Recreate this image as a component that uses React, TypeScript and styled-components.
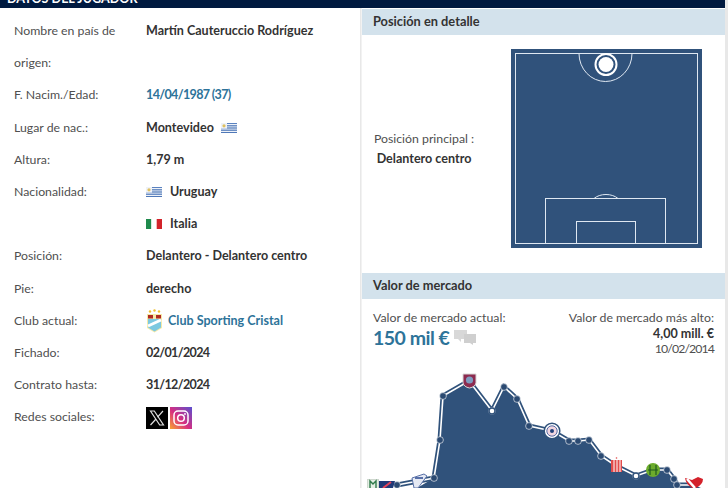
import { createGlobalStyle, styled } from "styled-components";

const GlobalStyle = createGlobalStyle`
  html, body {
    margin: 0;
    padding: 0;
    background: #fff;
  }
  body {
    font-family: Lato, "Noto Sans", "Liberation Sans", sans-serif;
    font-size: 12.3px;
    color: #333;
  }
`;

const Page = styled.div`
  width: 728px;
  height: 488px;
  overflow: hidden;
  display: grid;
  grid-template-columns: 360px 365px;
  grid-template-rows: 8px 1fr;
  background: #e8e8e8;
  padding-right: 3px;
  box-sizing: border-box;
`;

const TopBar = styled.div`
  grid-column: 1 / 3;
  background: #001a40;
  color: #fff;
  overflow: hidden;
  display: flex;
  align-items: flex-end;
  padding-left: 7px;
`;

const TopTitle = styled.h2`
  margin: 0 0 1px;
  font-size: 12.6px;
  line-height: 16px;
  font-weight: 700;
  flex-shrink: 0;
`;

const LeftPanel = styled.section`
  background: #fff;
  padding: 7px 14px 0;
`;

const InfoGrid = styled.dl`
  margin: 0;
  display: grid;
  grid-template-columns: 132px 1fr;
  grid-auto-rows: minmax(32.2px, auto);
  line-height: 32.2px;
`;

const Label = styled.dt`
  color: #4f4f4f;
`;

const Value = styled.dd<{ $link?: boolean; $date?: boolean }>`
  margin: 0;
  align-self: start;
  font-size: 12.55px;
  font-weight: 700;
  letter-spacing: ${(p) => (p.$date ? "-0.65px" : "0")};
  color: ${(p) => (p.$link ? "#2d7399" : "#333")};
  display: flex;
  align-items: center;
  height: 32.2px;
`;

const Right = styled.div`
  display: flex;
  flex-direction: column;
  margin-left: 1px;
  gap: 13px;
  padding-top: 1px;
  background: #fff;
  border-left: 1px solid #f2f2f2;
`;

const Card = styled.section`
  display: flex;
  flex-direction: column;
`;

const CardHead = styled.h3`
  margin: 0;
  height: 26px;
  line-height: 25px;
  padding-left: 11px;
  background: #d3e2ec;
  font-size: 12.8px;
  font-weight: 700;
  color: #333;
`;

const PositionBody = styled.div`
  display: grid;
  grid-template-columns: 149px 191px;
  align-items: center;
  padding: 14px 0 12px;
`;

const PositionText = styled.div`
  justify-self: start;
  margin-left: 11px;
  width: 102px;
  white-space: nowrap;
  text-align: center;
  line-height: 19.5px;
  color: #4f4f4f;
`;

const PositionName = styled.div`
  color: #333;
  font-size: 12.55px;
  font-weight: 700;
`;

const Pitch = styled.svg`
  display: block;
  width: 191px;
  height: 199px;
`;

const MarketBody = styled.div`
  height: 56px;
  box-sizing: border-box;
  padding: 11px 11px 0;
  display: flex;
  justify-content: space-between;
  line-height: 15.5px;
  color: #4f4f4f;
`;

const MarketBlock = styled.div<{ $right?: boolean }>`
  text-align: ${(p) => (p.$right ? "right" : "left")};
`;

const MarketValue = styled.div`
  display: flex;
  align-items: center;
  gap: 5px;
  font-size: 19.5px;
  letter-spacing: -0.5px;
  line-height: 24px;
  font-weight: 700;
  color: #2d7399;
`;

const HighValue = styled.div`
  font-size: 12.55px;
  font-weight: 700;
  color: #333;
`;

const HighDate = styled.div`
  letter-spacing: -0.9px;
`;

const Chart = styled.svg`
  display: block;
  width: 364px;
  height: 133px;
  flex-shrink: 0;
`;

const FlagSvg = styled.svg`
  width: 16px;
  height: 10px;
  flex-shrink: 0;
`;

const FlagAfter = styled(FlagSvg)`
  margin-left: 7px;
`;

const FlagBefore = styled(FlagSvg)`
  margin-right: 8px;
`;

const Crest = styled.svg`
  width: 17px;
  height: 24px;
  margin-right: 5px;
  flex-shrink: 0;
`;

const SocialRow = styled.div`
  display: flex;
  gap: 2px;
`;

const SocialIcon = styled.svg`
  display: block;
  width: 22px;
  height: 22px;
`;

const UruguayArt = () => (
  <>
    <rect width="16" height="10" fill="#eef2f8" />
    <rect y="0" width="16" height="1" fill="#5a82c0" />
    <rect y="2.2" width="16" height="1.2" fill="#4f78b8" />
    <rect y="4.4" width="16" height="1.2" fill="#4f78b8" />
    <rect y="6.6" width="16" height="1.2" fill="#4f78b8" />
    <rect y="9" width="16" height="1" fill="#4f78b8" />
    <rect width="6" height="5.600" fill="#eef2f8" />
    <circle cx="3" cy="2.800" r="1.600" fill="#dfc060" />
  </>
);

const points: [number, number][] = [
  [36, 215], [73, 208], [79, 170], [82, 126], [108, 111], [131, 141], [143, 117],
  [156, 129], [168, 156], [191, 161], [208, 171], [217, 171], [228, 170], [240, 186],
  [255, 196], [275, 206], [292, 200], [306, 200], [313, 209], [316, 215], [333, 215],
];

const linePath = points.map(([x, y]) => `${x},${y}`).join(" ");
const dots = points.filter((_, i) => ![4, 9, 14, 16, 20].includes(i));

const PlayerChart = () => (
  <Chart viewBox="1 85 364 133">
    <polygon points={`56,218 ${points.slice(1).map(([x, y]) => `${x},${y}`).join(" ")} 340,218`} fill="#30527b" />
    <polyline points={linePath} fill="none" stroke="#30527b" strokeWidth="5" />
    <polyline points={linePath} fill="none" stroke="#fff" strokeWidth="1.600" />
    {dots.map(([x, y]) => (
      <circle key={x} cx={x} cy={y} r="3.400" fill="#2b4a72" stroke="#fff" strokeWidth="0.600" />
    ))}
    <circle cx="131" cy="141" r="3" fill="#fff" stroke="#30527b" strokeWidth="1.400" />
    <circle cx="275" cy="206" r="3" fill="#fff" stroke="#30527b" strokeWidth="1.400" />

    {/* club crests along the line */}
    <path d="M102 104h13v9q-1 4-6.500 5q-5.500-1-6.500-5z" fill="#8d2b4f" stroke="#d8d8d8" />
    <circle cx="108.500" cy="110" r="3.600" fill="#7f9cc0" />

    <circle cx="191" cy="161" r="7.800" fill="#fff" stroke="#30527b" strokeWidth="1.500" />
    <circle cx="191" cy="161" r="5.200" fill="#f0d6e0" stroke="#2c4a90" strokeWidth="0.800" />
    <circle cx="191" cy="161" r="2" fill="#20407a" />

    <rect x="250" y="190" width="11" height="12" fill="#e24b4b" />
    <path d="M253 190v12M256 190v12M259 190v12" stroke="#fff" strokeWidth="1" />
    <circle cx="255.500" cy="188" r="0.800" fill="#e24b4b" />

    <ellipse cx="292" cy="200" rx="7" ry="7" fill="#6cac2c" />
    <path d="M287 200h10M289 195v10M295 195v10" stroke="#1f5a20" strokeWidth="1.200" />

    <path d="M324 208l7 2l6-3l5 2q0 6-9 10q-8-4-9-11z" fill="#d4212a" />
    <path d="M326 209l8 9" stroke="#fff" strokeWidth="2.500" />

    <rect x="6.500" y="209.500" width="11" height="9" fill="#e4efe4" stroke="#cfd8cf" />
    <path d="M9 218v-7l3 3l3-3v7" fill="none" stroke="#2f7a4a" strokeWidth="1.400" />
    <path d="M18 211h16l-2 7h-14z" fill="#203a78" />
    <path d="M22 218l8-6" stroke="#e4435a" strokeWidth="2" />

    <path d="M51 208l12-4l3 2l-9 12h-4z" fill="#e5e9f3" stroke="#5870a8" />
    <path d="M54 208h8" stroke="#5870a8" strokeWidth="2" />
  </Chart>
);

export default function App() {
  return (
    <>
      <GlobalStyle />
      <Page>
        <TopBar>
          <TopTitle>DATOS DEL JUGADOR</TopTitle>
        </TopBar>
        <LeftPanel>
          <InfoGrid>
            <Label>Nombre en país de origen:</Label>
            <Value>Martín Cauteruccio Rodríguez</Value>
            <Label>F. Nacim./Edad:</Label>
            <Value $link $date>14/04/1987 (37)</Value>
            <Label>Lugar de nac.:</Label>
            <Value>
              Montevideo
              <FlagAfter viewBox="0 0 16 10"><UruguayArt /></FlagAfter>
            </Value>
            <Label>Altura:</Label>
            <Value>1,79 m</Value>
            <Label>Nacionalidad:</Label>
            <Value>
              <FlagBefore viewBox="0 0 16 10"><UruguayArt /></FlagBefore>
              Uruguay
            </Value>
            <Label />
            <Value>
              <FlagBefore viewBox="0 0 16 10">
                <rect width="5.400" height="10" fill="#1f8a4c" />
                <rect x="5.400" width="5.300" height="10" fill="#fff" />
                <rect x="10.700" width="5.300" height="10" fill="#d2232a" />
              </FlagBefore>
              Italia
            </Value>
            <Label>Posición:</Label>
            <Value>Delantero - Delantero centro</Value>
            <Label>Pie:</Label>
            <Value>derecho</Value>
            <Label>Club actual:</Label>
            <Value $link>
              <Crest viewBox="0 0 17 24">
                <circle cx="4" cy="2.500" r="1.200" fill="#f0c030" />
                <circle cx="8.500" cy="1.500" r="1.200" fill="#f0c030" />
                <circle cx="13" cy="2.500" r="1.200" fill="#f0c030" />
                <path d="M1 5h15v14l-7.500 4.500L1 19z" fill="#f5e9a8" />
                <rect x="2" y="6" width="5" height="3.500" fill="#b02a20" />
                <rect x="10" y="6" width="5" height="3.500" fill="#b02a20" />
                <path d="M2 10h13v8.500l-6.500 4l-6.500-4z" fill="#7cc8e0" />
                <path d="M2 17l13-6" stroke="#fff" strokeWidth="3" />
              </Crest>
              Club Sporting Cristal
            </Value>
            <Label>Fichado:</Label>
            <Value $date>02/01/2024</Value>
            <Label>Contrato hasta:</Label>
            <Value $date>31/12/2024</Value>
            <Label>Redes sociales:</Label>
            <Value>
              <SocialRow>
                <SocialIcon viewBox="0 0 22 22">
                  <rect width="22" height="22" fill="#000" />
                  <path d="M4.500 4h3.800l9.200 14h-3.800z" fill="none" stroke="#ddd" strokeWidth="1.200" />
                  <path d="M17 4l-5.500 6.200M10 12l-5.500 6" stroke="#ddd" strokeWidth="1.200" />
                </SocialIcon>
                <SocialIcon viewBox="0 0 22 22">
                  <defs>
                    <linearGradient id="ig" x1="0" y1="1" x2="1" y2="0">
                      <stop offset="0" stopColor="#f9a530" />
                      <stop offset="0.450" stopColor="#d72e80" />
                      <stop offset="1" stopColor="#5a4fcf" />
                    </linearGradient>
                  </defs>
                  <rect width="22" height="22" fill="url(#ig)" />
                  <rect x="4" y="4" width="14" height="14" rx="4" fill="none" stroke="#fff" strokeWidth="1.500" />
                  <circle cx="11" cy="11" r="3.300" fill="none" stroke="#fff" strokeWidth="1.500" />
                  <circle cx="15" cy="7" r="0.900" fill="#fff" />
                </SocialIcon>
              </SocialRow>
            </Value>
          </InfoGrid>
        </LeftPanel>
        <Right>
          <Card>
            <CardHead>Posición en detalle</CardHead>
            <PositionBody>
              <PositionText>
                Posición principal :
                <PositionName>Delantero centro</PositionName>
              </PositionText>
              <Pitch viewBox="0 0 191 199">
                <rect width="191" height="199" fill="#30527b" />
                <g fill="none" stroke="#dfe8f2" strokeWidth="1">
                  <rect x="4.500" y="4.500" width="182" height="190" />
                  <rect x="34.500" y="149.500" width="120" height="45" />
                  <rect x="65.500" y="172.500" width="59" height="22" />
                  <path d="M68 4.500a26.500 28 0 0 0 53 0" />
                  <path d="M83 149.500a15 10 0 0 1 24 0" />
                </g>
                <circle cx="95" cy="15.500" r="10.500" fill="#30527b" stroke="#fff" strokeWidth="2" />
                <circle cx="95" cy="15.500" r="7.500" fill="#fff" />
              </Pitch>
            </PositionBody>
          </Card>
          <Card>
            <CardHead>Valor de mercado</CardHead>
            <MarketBody>
              <MarketBlock>
                Valor de mercado actual:
                <MarketValue>
                  150 mil €
                  <svg width="22" height="15" viewBox="0 0 22 15">
                    <path d="M0 0h13v9H7v3L4 9H0z" fill="#d8d8d8" />
                    <path d="M10 4h12v9h-3v2l-3-2h-6z" fill="#cfcfcf" />
                  </svg>
                </MarketValue>
              </MarketBlock>
              <MarketBlock $right>
                Valor de mercado más alto:
                <HighValue>4,00 mill. €</HighValue>
                <HighDate>10/02/2014</HighDate>
              </MarketBlock>
            </MarketBody>
            <PlayerChart />
          </Card>
        </Right>
      </Page>
    </>
  );
}
